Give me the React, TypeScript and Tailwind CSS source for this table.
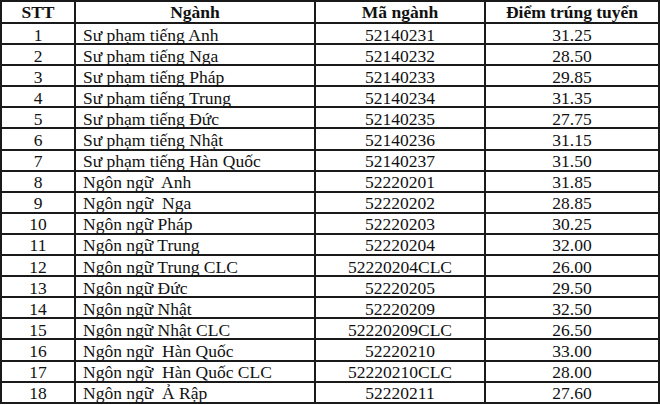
const rows = [
  ['1', 'Sư phạm tiếng Anh', '52140231', '31.25'],
  ['2', 'Sư phạm tiếng Nga', '52140232', '28.50'],
  ['3', 'Sư phạm tiếng Pháp', '52140233', '29.85'],
  ['4', 'Sư phạm tiếng Trung', '52140234', '31.35'],
  ['5', 'Sư phạm tiếng Đức', '52140235', '27.75'],
  ['6', 'Sư phạm tiếng Nhật', '52140236', '31.15'],
  ['7', 'Sư phạm tiếng Hàn Quốc', '52140237', '31.50'],
  ['8', 'Ngôn ngữ  Anh', '52220201', '31.85'],
  ['9', 'Ngôn ngữ  Nga', '52220202', '28.85'],
  ['10', 'Ngôn ngữ Pháp', '52220203', '30.25'],
  ['11', 'Ngôn ngữ Trung', '52220204', '32.00'],
  ['12', 'Ngôn ngữ Trung CLC', '52220204CLC', '26.00'],
  ['13', 'Ngôn ngữ Đức', '52220205', '29.50'],
  ['14', 'Ngôn ngữ Nhật', '52220209', '32.50'],
  ['15', 'Ngôn ngữ Nhật CLC', '52220209CLC', '26.50'],
  ['16', 'Ngôn ngữ  Hàn Quốc', '52220210', '33.00'],
  ['17', 'Ngôn ngữ  Hàn Quốc CLC', '52220210CLC', '28.00'],
  ['18', 'Ngôn ngữ  Ả Rập', '52220211', '27.60'],
]

export default function App() {
  return (
    <div className="w-[660px] h-[405px] bg-white overflow-hidden" style={{ fontFamily: '"Liberation Serif", "Times New Roman", serif' }}>
      <table className="table-fixed border-collapse w-[658px] text-[17.5px] leading-[16px] text-[#111]">
        <colgroup>
          <col className="w-[74px]" />
          <col className="w-[240px]" />
          <col className="w-[170px]" />
          <col className="w-[174px]" />
        </colgroup>
        <thead>
          <tr className="h-[22px]">
            <th className="border-2 border-[#1a1a1a] font-bold text-center p-0">STT</th>
            <th className="border-2 border-[#1a1a1a] font-bold text-center p-0">Ngành</th>
            <th className="border-2 border-[#1a1a1a] font-bold text-center p-0">Mã ngành</th>
            <th className="border-2 border-[#1a1a1a] font-bold text-center p-0">Điểm trúng tuyển</th>
          </tr>
        </thead>
        <tbody>
          {rows.map((r) => (
            <tr key={r[0]} className="h-[21.1px]">
              <td className="border-2 border-[#1a1a1a] text-center p-0 pt-[2px]">{r[0]}</td>
              <td className="border-2 border-[#1a1a1a] text-left pl-[7px] pr-0 pb-0 pt-[2px] whitespace-pre">{r[1]}</td>
              <td className="border-2 border-[#1a1a1a] text-center p-0 pt-[2px]">{r[2]}</td>
              <td className="border-2 border-[#1a1a1a] text-center p-0 pt-[2px]">{r[3]}</td>
            </tr>
          ))}
        </tbody>
      </table>
    </div>
  )
}
